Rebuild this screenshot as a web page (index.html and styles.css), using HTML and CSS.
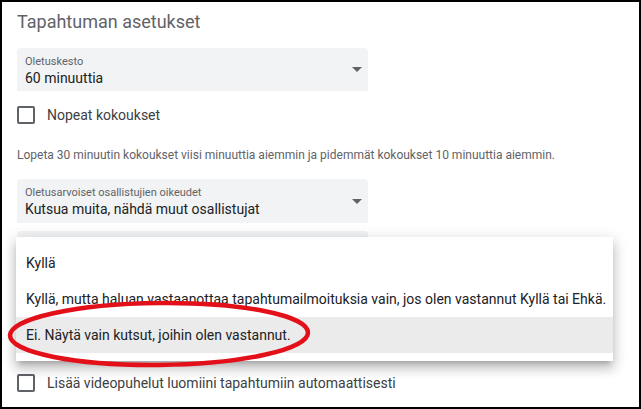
FILE: index.html
```html
<!DOCTYPE html>
<html lang="fi">
<head>
    <meta charset="UTF-8">
    <meta name="viewport" content="width=device-width, initial-scale=1.0">
    <title>Tapahtuman asetukset</title>
    <link rel="stylesheet" href="styles.css">
</head>
<body>
    <div class="page">
        <h2 class="title">Tapahtuman asetukset</h2>

        <div class="select first">
            <div class="select-text">
                <span class="select-label">Oletuskesto</span>
                <span class="select-value">60 minuuttia</span>
            </div>
            <span class="arrow"></span>
        </div>

        <label class="check-row">
            <span class="checkbox"></span>
            <span>Nopeat kokoukset</span>
        </label>

        <p class="hint">Lopeta 30 minuutin kokoukset viisi minuuttia aiemmin ja pidemmät kokoukset 10 minuuttia aiemmin.</p>

        <div class="select">
            <div class="select-text">
                <span class="select-label">Oletusarvoiset osallistujien oikeudet</span>
                <span class="select-value">Kutsua muita, nähdä muut osallistujat</span>
            </div>
            <span class="arrow"></span>
        </div>

        <!-- select that the open menu covers -->
        <div class="select under"></div>

        <label class="check-row">
            <span class="checkbox"></span>
            <span>Lisää videopuhelut luomiini tapahtumiin automaattisesti</span>
        </label>

        <ul class="menu">
            <li class="menu-item">Kyllä</li>
            <li class="menu-item">Kyllä, mutta haluan vastaanottaa tapahtumailmoituksia vain, jos olen vastannut Kyllä tai Ehkä.</li>
            <li class="menu-item selected">Ei. Näytä vain kutsut, joihin olen vastannut.</li>
        </ul>

        <svg class="mark" width="641" height="409" viewBox="0 0 641 409">
            <ellipse cx="159" cy="334" rx="149" ry="31" fill="none" stroke="#e3101a" stroke-width="4.5" transform="rotate(-0.6 159 334)"/>
        </svg>
    </div>
</body>
</html>
```

FILE: styles.css
```css
body {
    margin: 0;
    font-family: Roboto, "Noto Sans", Arial, sans-serif;
    color: #3c4043;
    background-color: #fff;
}

.page {
    position: relative;
    box-sizing: border-box;
    width: 641px;
    height: 409px;
    padding: 8px 15px 0;
    border: 2px solid #000;
    overflow: hidden;
}

.title {
    margin: 0 0 14px;
    font-size: 18px;
    font-weight: 400;
    line-height: 24px;
    color: #5f6368;
}

.select {
    display: flex;
    align-items: center;
    box-sizing: border-box;
    width: 351px;
    height: 44px;
    padding: 7px 6px 0 8px;
    background-color: #f1f3f4;
    border-radius: 4px 4px 0 0;
}

.select.first {
    height: 43px;
    margin-bottom: 15px;
}

.select.under {
    margin-top: 8px;
    margin-bottom: 99px;
}

.select-text {
    flex: 1;
    display: flex;
    flex-direction: column;
    align-self: flex-start;
}

.select-label {
    font-size: 11px;
    line-height: 14px;
    color: #5f6368;
}

.select-value {
    font-size: 14px;
    line-height: 19px;
    color: #202124;
}

.arrow {
    width: 0;
    height: 0;
    margin-top: -7px;
    border-left: 5px solid transparent;
    border-right: 5px solid transparent;
    border-top: 5px solid #5f6368;
}

.check-row {
    display: flex;
    align-items: center;
    gap: 12px;
    font-size: 14px;
    line-height: 18px;
    color: #3c4043;
}

.checkbox {
    box-sizing: border-box;
    width: 18px;
    height: 18px;
    border: 2px solid #5f6368;
    border-radius: 2px;
}

.hint {
    margin: 23px 0 16px;
    font-size: 12px;
    line-height: 16px;
    color: #5f6368;
}

.menu {
    position: absolute;
    top: 235px;
    left: 14px;
    width: 597px;
    margin: 0;
    padding: 8px 0;
    list-style: none;
    background-color: #fff;
    box-shadow: 0 5px 5px -3px rgba(0, 0, 0, 0.2), 0 8px 10px 1px rgba(0, 0, 0, 0.14), 0 3px 14px 2px rgba(0, 0, 0, 0.12);
}

.menu-item {
    height: 36px;
    padding: 0 10px;
    font-size: 14px;
    line-height: 36px;
    white-space: nowrap;
    color: #202124;
}

.menu-item.selected {
    background-color: #ebebeb;
}

.mark {
    position: absolute;
    top: -2px;
    left: -2px;
    pointer-events: none;
}
```
